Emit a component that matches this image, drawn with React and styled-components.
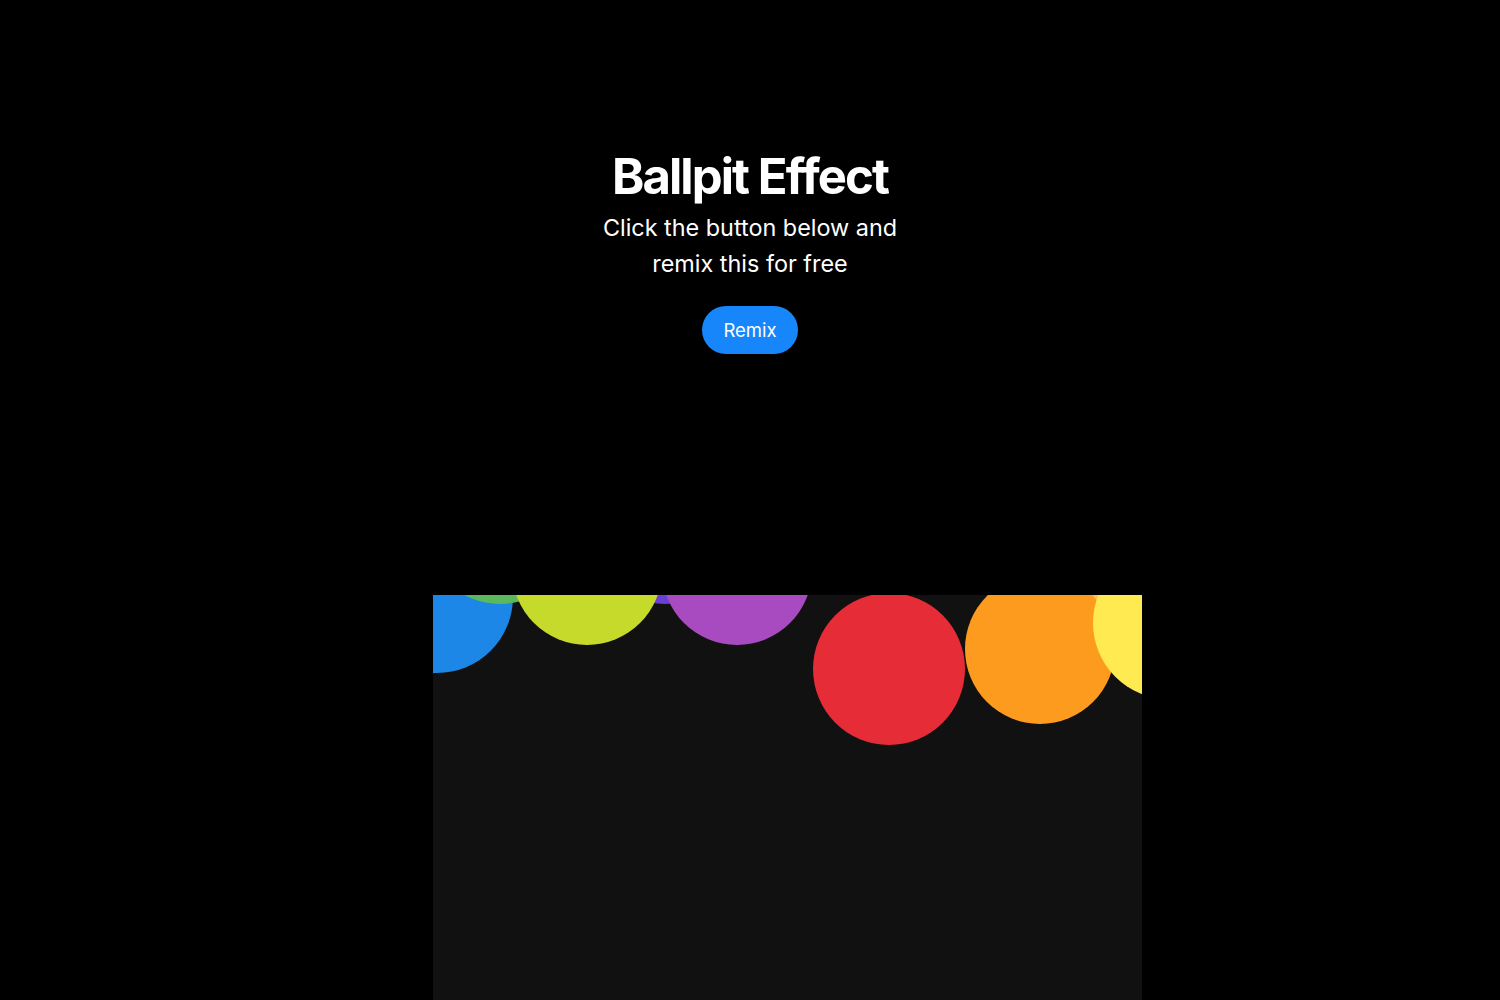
import React from "react";
import styled, { createGlobalStyle } from "styled-components";

const Global = createGlobalStyle`
  html, body { margin: 0; padding: 0; background: #000; }
  body { font-family: Inter, "Noto Sans", sans-serif; color: #fff; overflow: hidden; }
`;

const Page = styled.div`
  width: 1500px;
  height: 1000px;
  display: flex;
  flex-direction: column;
  background: #000;
  overflow: hidden;
`;

const Hero = styled.section`
  display: flex;
  flex-direction: column;
  align-items: center;
  padding-top: 148px;
`;

const Title = styled.h1`
  margin: 0;
  font-family: Inter, sans-serif;
  font-weight: 700;
  font-size: 49px;
  line-height: 58px;
  letter-spacing: -1.9px;
  color: #fff;
`;

const Subtitle = styled.p`
  margin: 4px 0 0;
  width: 320px;
  text-align: center;
  font-family: Inter, sans-serif;
  font-weight: 400;
  font-size: 23.4px;
  line-height: 36px;
  color: #fff;
`;

const RemixButton = styled.button`
  margin-top: 24px;
  height: 48px;
  padding: 0 21px;
  border: none;
  border-radius: 24px;
  background: #1786fb;
  color: #fff;
  font-family: Inter, sans-serif;
  font-size: 18.5px;
  font-weight: 400;
  cursor: pointer;
`;

const Stage = styled.div`
  margin-top: 241px;
  margin-left: 433px;
  width: 709px;
  flex: 1;
  background: #111111;
  overflow: hidden;
`;

const Balls = styled.svg`
  display: block;
  width: 709px;
  height: 405px;
`;

const balls = [
  { x: 4, y: 2, r: 76, c: "#1c87e6" },
  { x: 67, y: -66, r: 75, c: "#5cb85c" },
  { x: 232, y: -66, r: 75, c: "#6a40d4" },
  { x: 652, y: -56, r: 75, c: "#ffbd5c" },
  { x: 154, y: -25, r: 75, c: "#c5da2a" },
  { x: 304, y: -25, r: 75, c: "#a84bc1" },
  { x: 456, y: 74, r: 76, c: "#e52c37" },
  { x: 607, y: 54, r: 75, c: "#fd9b1f" },
  { x: 736, y: 28, r: 76, c: "#ffea52" },
];

export default function App() {
  return (
    <Page>
      <Global />
      <Hero>
        <Title>Ballpit Effect</Title>
        <Subtitle>Click the button below and remix this for free</Subtitle>
        <RemixButton>Remix</RemixButton>
      </Hero>
      <Stage>
        <Balls viewBox="0 0 709 405">
          {balls.map((b, i) => (
            <circle key={i} cx={b.x} cy={b.y} r={b.r} fill={b.c} />
          ))}
        </Balls>
      </Stage>
    </Page>
  );
}
